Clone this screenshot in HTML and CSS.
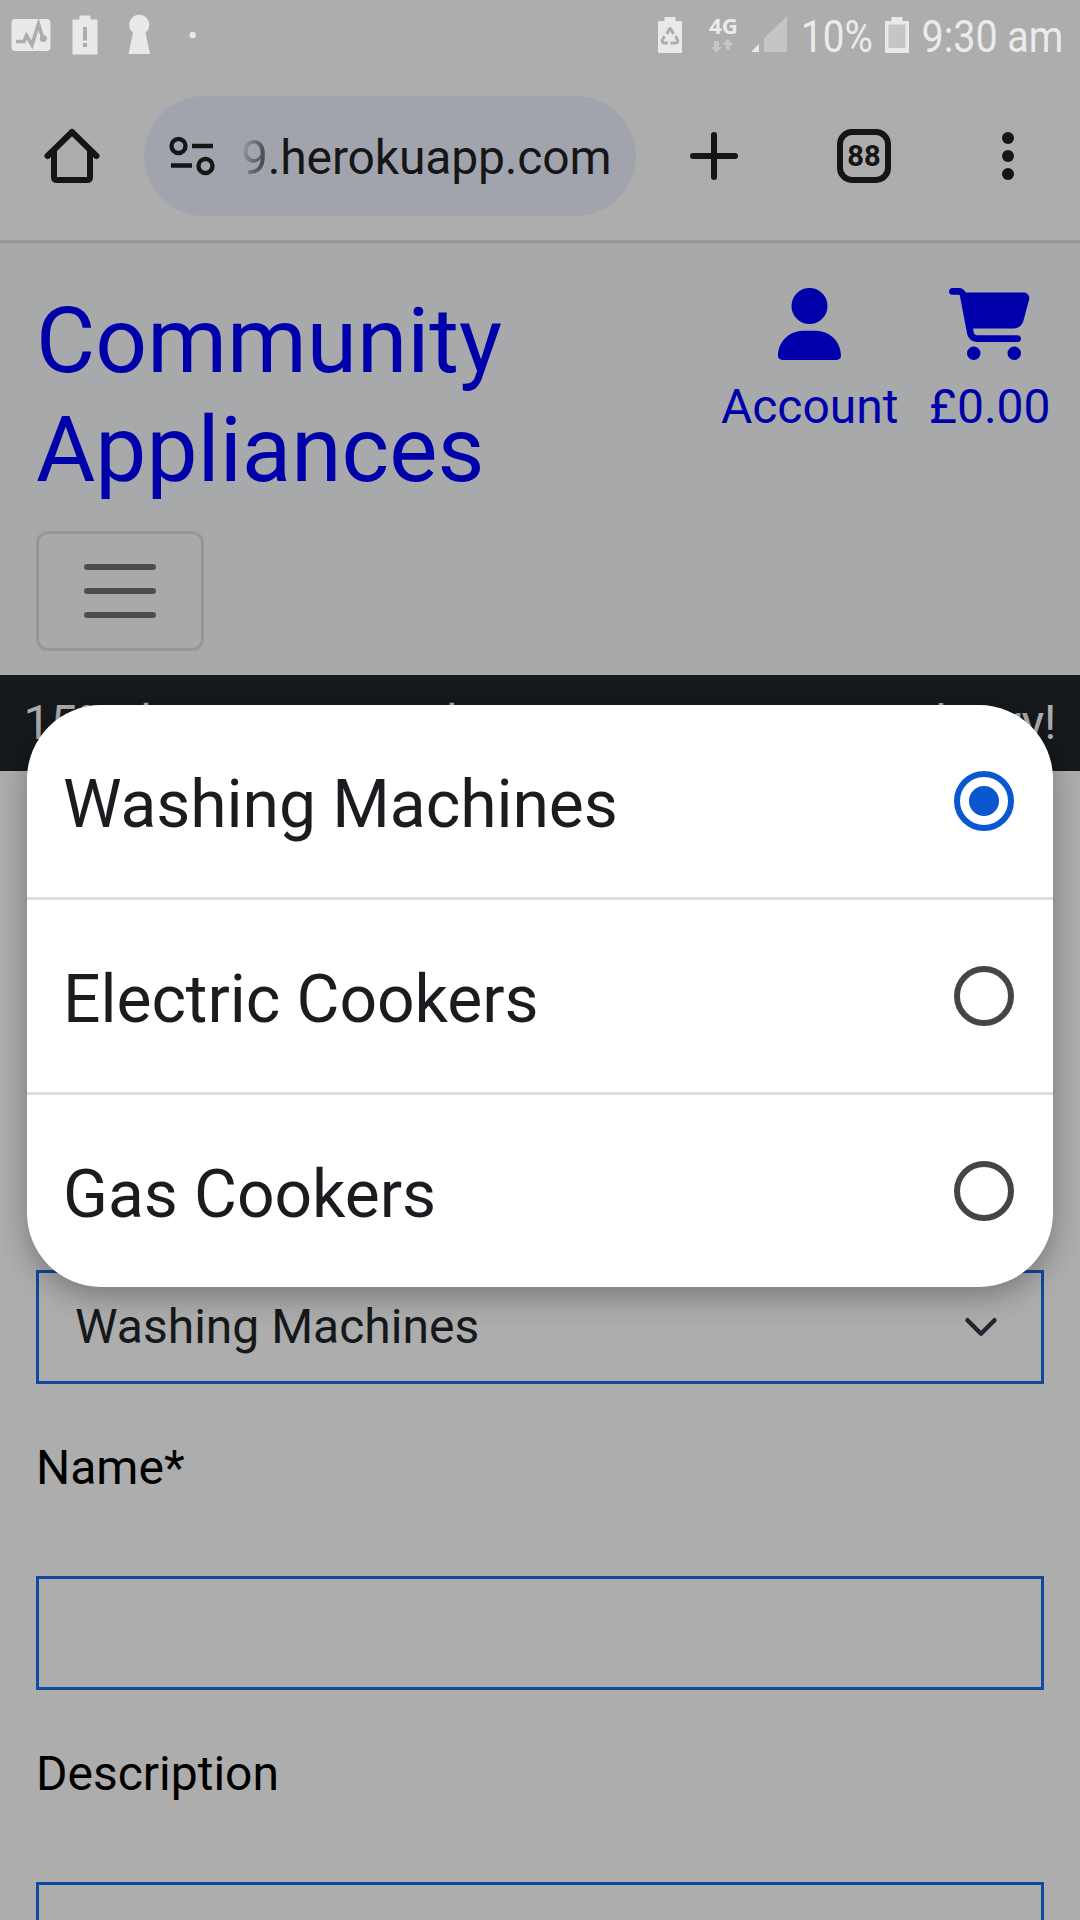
FILE: index.html
```html
<!DOCTYPE html>
<html lang="en">
<head>
<meta charset="utf-8">
<title>Community Appliances</title>
<link rel="stylesheet" href="styles.css">
</head>
<body>
<div class="status-bar">
  <div class="status-group">
    <svg width="60" height="72" viewBox="0 0 60 72"><rect x="11.5" y="19" width="39" height="32" rx="4" fill="#e9e9e9"/><path d="M16 41.5h8l2.5-6 5.500 9.500 6.500-21 4 13.500" fill="none" stroke="#adadad" stroke-width="3.600"/><circle cx="43.300" cy="38.500" r="3.500" fill="#adadad"/></svg>
    <svg width="50" height="72" viewBox="60 0 50 72"><path d="M79.500 15.500h11v4h7v35h-25v-35h7z" fill="#e9e9e9"/><path d="M83 27h4v13.500h-4zM83 43h4v4h-4z" fill="#adadad"/></svg>
    <svg width="60" height="72" viewBox="110 0 60 72"><path d="M128.500 54l4.500-21.500a10 10 0 1 1 12.500 0L150 54z" fill="#e9e9e9"/></svg>
    <svg width="40" height="72" viewBox="170 0 40 72"><circle cx="192.700" cy="35" r="3.200" fill="#e9e9e9"/></svg>
  </div>
  <div class="status-group">
    <svg width="50" height="72" viewBox="650 0 50 72"><path d="M664.500 17h11v4h5.500q1 0 1 1v30q0 1-1 1h-22q-1 0-1-1V22q0-1 1-1h5.500z" fill="#e9e9e9"/><g fill="none" stroke="#adadad" stroke-width="3"><path d="M666.800 34l2.300-4.500q1-1.800 2 0l2.300 4.500"/><path d="M664.500 36l-2 4q-1 3 2 3h3.500"/><path d="M675.500 36l2 4q1 3-2 3h-5"/></g></svg>
    <svg width="44" height="72" viewBox="700 0 44 72"><text class="network" x="709" y="34" textLength="29" lengthAdjust="spacingAndGlyphs">4G</text><path d="M714 41h5v6h3l-5.500 5.500-5.500-5.500h3zM726 50v-5h-4l6-6 6 6h-4v5z" fill="#c5c5c5"/></svg>
    <svg width="50" height="72" viewBox="744 0 50 72"><path d="M751 52l8-8v8z" fill="#e9e9e9"/><path d="M764 38.500L787 16v36h-23z" fill="#c5c5c5"/></svg>
    <svg width="84" height="72" viewBox="794 0 84 72"><text class="status-text" transform="translate(801 52) scale(.86 1)">10%</text></svg>
    <svg width="38" height="72" viewBox="878 0 38 72"><path d="M891.500 17h11v4h5.500q1 0 1 1v30q0 1-1 1h-22q-1 0-1-1V22q0-1 1-1h5.500z" fill="#e9e9e9"/><path d="M888.500 24.500h17V48h-17z" fill="#c5c5c5"/></svg>
    <svg width="164" height="72" viewBox="916 0 164 72"><text class="status-text" transform="translate(921.500 52) scale(.877 1)">9:30 am</text></svg>
  </div>
</div>

<div class="toolbar">
  <svg class="tool tool-home" viewBox="36 120 72 72"><path d="M47.500 156L72 132l24.500 24M54 150v27q0 3 3 3h30q3 0 3-3v-27" fill="none" stroke="#151515" stroke-width="6" stroke-linecap="round" stroke-linejoin="round"/></svg>
  <div class="url-pill">
    <svg width="54" height="48" viewBox="165 132 54 48" fill="none" stroke="#151515"><circle cx="178.500" cy="146" r="7" stroke-width="4.300"/><path d="M192 146h21M171 165.500h21" stroke-width="4.300"/><circle cx="205.500" cy="166" r="7" stroke-width="4.300"/></svg>
    <span class="url"><span class="url-fade">9</span>.herokuapp.com</span>
  </div>
  <svg class="tool tool-plus" viewBox="678 120 72 72"><path d="M714 135v42M693 156h42" stroke="#151515" stroke-width="6" stroke-linecap="round"/></svg>
  <div class="tabs">88</div>
  <svg class="tool tool-more" viewBox="972 120 72 72" fill="#151515"><circle cx="1008" cy="138" r="6"/><circle cx="1008" cy="156" r="6"/><circle cx="1008" cy="174" r="6"/></svg>
</div>

<header class="site-header">
  <div class="header-row">
    <div class="brand">Community<br>Appliances</div>
    <nav class="header-links">
      <div class="header-link">
        <svg width="63" height="72" viewBox="0 0 448 512" fill="#0000ab"><path d="M224 256A128 128 0 1 0 224 0a128 128 0 1 0 0 256zm-45.700 48C79.800 304 0 383.800 0 482.300C0 498.700 13.300 512 29.700 512H418.300c16.400 0 29.700-13.300 29.700-29.700C448 383.800 368.200 304 269.700 304H178.300z"/></svg>
        <span>Account</span>
      </div>
      <div class="header-link">
        <svg width="81" height="72" viewBox="0 0 576 512" fill="#0000ab"><path d="M0 24C0 10.700 10.700 0 24 0H69.500c22 0 41.500 12.800 50.600 32h411c26.300 0 45.500 25 38.600 50.400l-41 152.300c-8.500 31.400-37 53.300-69.500 53.300H170.700l5.400 28.500c2.200 11.300 12.100 19.500 23.600 19.500H488c13.300 0 24 10.700 24 24s-10.700 24-24 24H199.700c-34.600 0-64.300-24.600-70.700-58.500L77.400 54.500c-.7-3.800-4-6.500-7.900-6.500H24C10.700 48 0 37.300 0 24zM128 464a48 48 0 1 1 96 0 48 48 0 1 1-96 0zm336-48a48 48 0 1 1 0 96 48 48 0 1 1 0-96z"/></svg>
        <span>£0.00</span>
      </div>
    </nav>
  </div>
  <div class="toggler"><i></i><i></i><i></i></div>
</header>

<div class="banner">15% discount on orders <span class="offer">over £1000.00, so</span> hurry!</div>

<main class="form">
  <div class="field select">
    <span>Washing Machines</span>
    <svg width="36" height="36" viewBox="0 0 16 16"><path d="m2 5 6 6 6-6" fill="none" stroke="#23262e" stroke-width="2" stroke-linecap="round" stroke-linejoin="round"/></svg>
  </div>
  <div class="label">Name*</div>
  <div class="field"></div>
  <div class="label">Description</div>
  <div class="field"></div>
</main>

<div class="dialog">
  <div class="option"><span>Washing Machines</span><span class="radio checked"></span></div>
  <div class="option"><span>Electric Cookers</span><span class="radio"></span></div>
  <div class="option"><span>Gas Cookers</span><span class="radio"></span></div>
</div>
</body>
</html>
```
FILE: styles.css
```css
* { box-sizing: border-box; }
html { overflow: hidden; }
body {
  position: relative;
  margin: 0;
  width: 1080px;
  height: 1920px;
  overflow: hidden;
  background: #adadad;
  font: 48px/72px Roboto, sans-serif;
  color: #000;
}
svg { display: block; flex: none; }

.status-bar { display: flex; justify-content: space-between; height: 72px; }
.status-group { display: flex; }
.status-text { font: 45px Roboto, sans-serif; fill: #ebebeb; }
.network { font: bold 22px "Noto Sans", sans-serif; fill: #ebebeb; }

.toolbar {
  display: flex;
  align-items: center;
  height: 171px;
  padding: 0 36px;
  border-bottom: 3px solid #989898;
}
.tool { width: 72px; height: 72px; }
.url-pill {
  display: flex;
  align-items: center;
  width: 492px;
  height: 120px;
  margin: 0 42px 0 36px;
  padding-left: 21px;
  border-radius: 60px;
  background: #a1a4ad;
}
.url { margin-left: 22px; padding-top: 3px; color: #161616; white-space: nowrap; letter-spacing: -.15px; }
.url-fade {
  background: linear-gradient(100deg, #94969c 15%, #333 95%);
  background-clip: text;
  -webkit-background-clip: text;
  color: transparent;
}
.tabs {
  width: 54px;
  height: 54px;
  margin: 0 81px 0 87px;
  border: 6px solid #151515;
  border-radius: 15px;
  color: #151515;
  font-size: 29px;
  font-weight: bold;
  line-height: 42px;
  text-align: center;
}

.site-header { height: 432px; padding: 45px 29.500px 0 36px; background: #a7a9ab; color: #0000ab; }
.header-row { display: flex; justify-content: space-between; height: 243px; }
.brand { margin-top: -1px; font-size: 91px; line-height: 108.500px; }
.header-links { display: flex; gap: 30.500px; }
.header-link { display: flex; flex-direction: column; align-items: center; gap: 11px; }
.toggler {
  display: flex;
  flex-direction: column;
  align-items: center;
  justify-content: center;
  gap: 18px;
  width: 168px;
  height: 120px;
  border: 3px solid #969799;
  border-radius: 12px;
}
.toggler i { width: 72px; height: 6px; border-radius: 3px; background: #4d4d4d; }

.banner { height: 96px; padding: 12px 0; background: #15191c; color: #adadad; text-align: center; white-space: nowrap; }
.offer { letter-spacing: .5px; }

.form { padding: 499px 36px 0; }
.field { height: 114px; border: 3px solid #0f4a9e; }
.select { display: flex; align-items: center; justify-content: space-between; padding: 0 42px 0 36px; color: #16191c; }
.label { height: 192px; padding-top: 48px; }

.dialog {
  position: absolute;
  left: 27px;
  top: 705px;
  width: 1026px;
  border-radius: 74px;
  background: #fff;
  box-shadow: 0 9px 30px rgba(0, 0, 0, .3);
}
.option {
  display: flex;
  align-items: center;
  justify-content: space-between;
  height: 195px;
  padding: 0 39px 0 36px;
  border-bottom: 3px solid #dfdfdf;
  color: #1c1b20;
  font-size: 66px;
  line-height: 84px;
  letter-spacing: -.06px;
}
.option > span:first-child { padding-top: 7px; }
.option:last-child { height: 192px; border-bottom: 0; }
.radio { width: 60px; height: 60px; border: 6px solid #444544; border-radius: 50%; }
.radio.checked { border-color: #0b57d0; background: radial-gradient(circle, #0b57d0 14.500px, #fff 15.500px); }
```
